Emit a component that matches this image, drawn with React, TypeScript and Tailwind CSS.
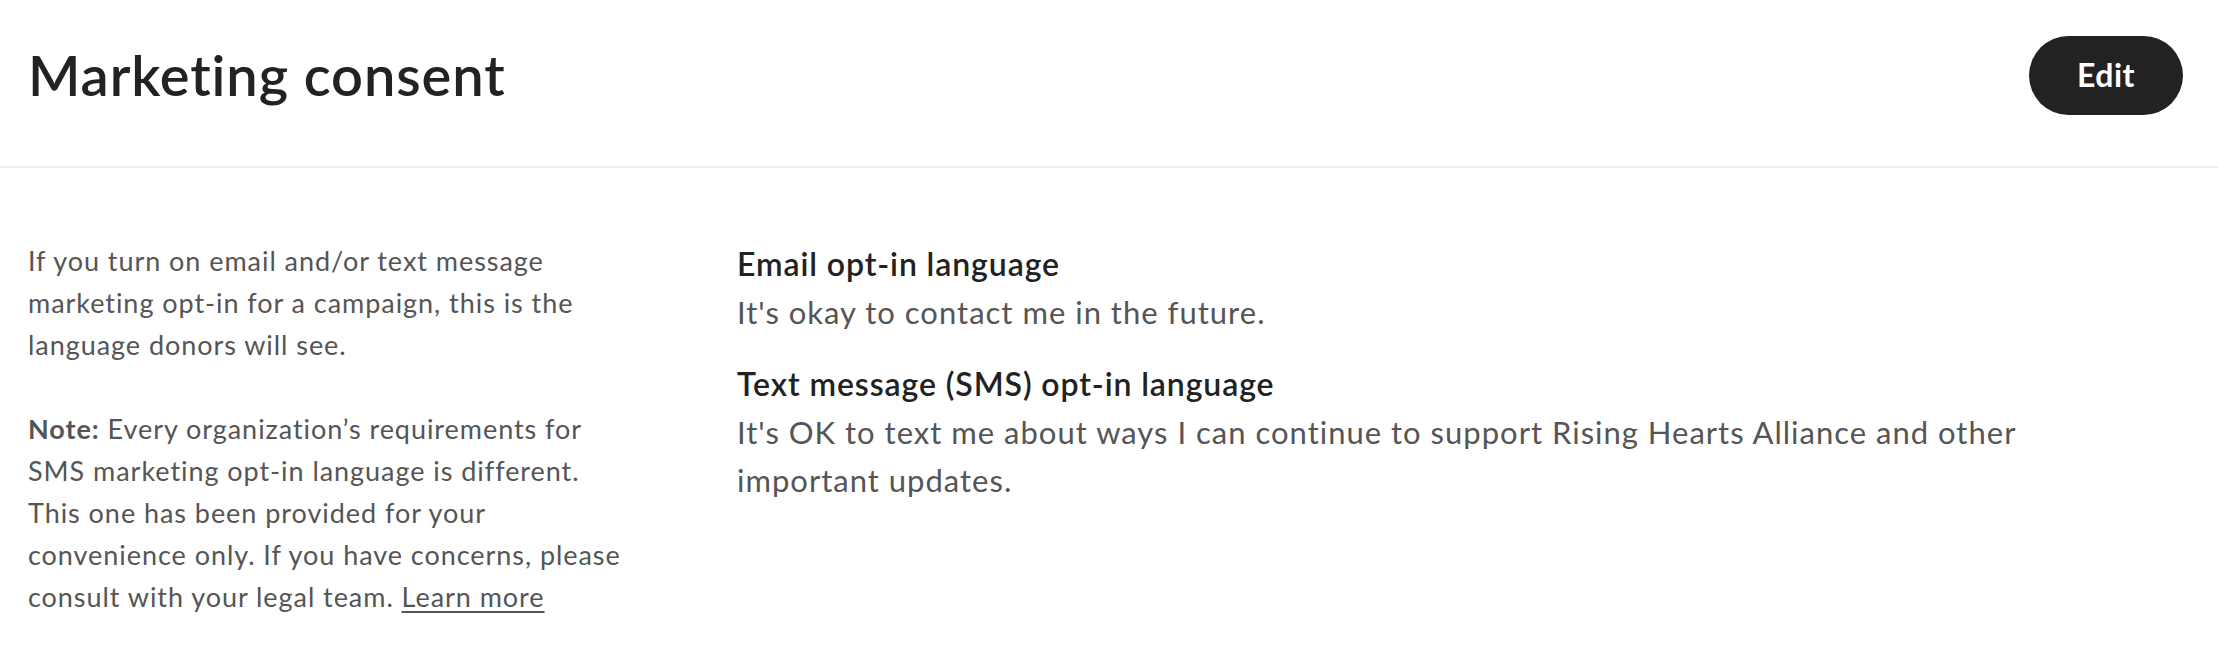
import React from 'react';

const fontStack = "font-['Lato','Open_Sans',sans-serif]";

const ConsentHeader: React.FC = () => (
    <header className="h-[168px] pl-[28px] pr-[35px] pb-[16px] flex justify-between items-center border-b-2 border-[#eeeeee]">
        <h1 className="text-[56px] font-semibold text-[#222222] tracking-[0.9px] leading-none">Marketing consent</h1>
        <button className="w-[154px] h-[79px] rounded-full bg-[#222222] text-white text-[32px] font-bold tracking-[0.5px] leading-none">
            Edit
        </button>
    </header>
);

const OptInBlock: React.FC<{ title: string; text: string; className?: string }> = ({ title, text, className }) => (
    <div className={className}>
        <h3 className="text-[32px] font-semibold text-[#222222] tracking-[0.9px] leading-[48px]">{title}</h3>
        <p className="text-[31px] text-[#555555] tracking-[1px] leading-[48px]">{text}</p>
    </div>
);

export default function App() {
    return (
        <div className={`${fontStack} bg-white w-[2218px] h-[672px]`}>
            <ConsentHeader />
            <div className="flex pl-[28px] pt-[72px]">
                <div className="w-[604px] shrink-0 text-[27px] leading-[42px] tracking-[0.95px] text-[#555555]">
                    <p>If you turn on email and/or text message marketing opt-in for a campaign, this is the language donors will see.</p>
                    <p className="mt-[42px]">
                        <strong className="font-bold">Note:</strong> Every organization’s requirements for SMS marketing opt-in language is different. This one has been provided for your convenience only. If you have concerns, please consult with your legal team.{' '}
                        <a href="#" className="underline underline-offset-4">Learn more</a>
                    </p>
                </div>
                <div className="ml-[105px] w-[1380px]">
                    <OptInBlock title="Email opt-in language" text="It's okay to contact me in the future." />
                    <OptInBlock
                        className="mt-[24px]"
                        title="Text message (SMS) opt-in language"
                        text="It's OK to text me about ways I can continue to support Rising Hearts Alliance and other important updates."
                    />
                </div>
            </div>
        </div>
    );
}
